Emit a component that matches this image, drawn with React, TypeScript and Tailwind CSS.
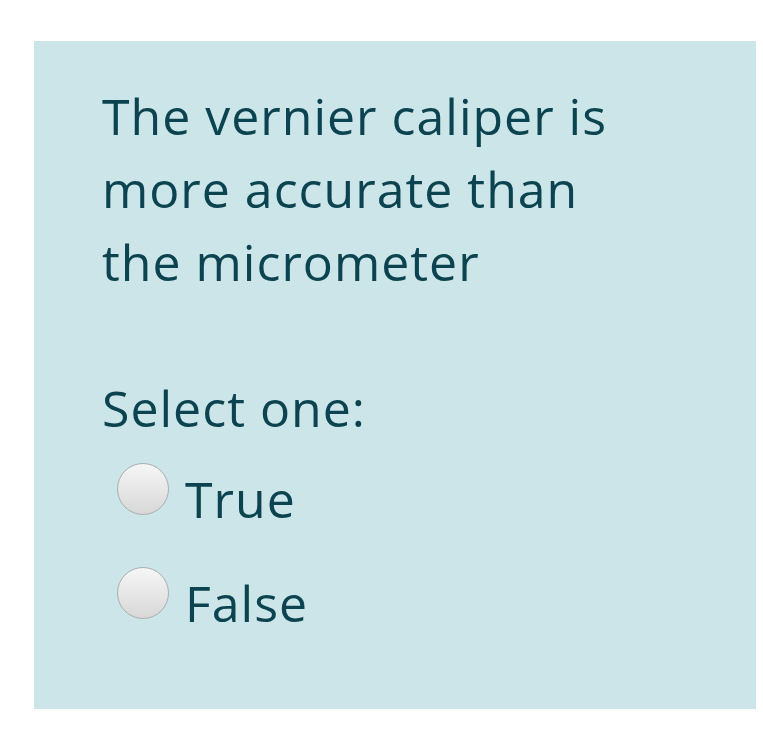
export default function App() {
  const options = ['True', 'False'];

  return (
    <div className="min-h-screen bg-white pt-[41px] pl-[34px]">
      <div
        className="w-[722px] h-[668px] bg-[#cce5e9] pl-[68px] pr-6 pt-[39px] text-[#0b4450]"
        style={{ fontFamily: '"Open Sans", sans-serif' }}
      >
        <p className="text-[50px] leading-[73px] tracking-[1px]">
          The vernier caliper is
          <br />
          more accurate than
          <br />
          the micrometer
        </p>

        <p className="text-[50px] leading-[73px] tracking-[1px] mt-[73px]">Select one:</p>

        <div className="mt-[18px] flex flex-col gap-[42px] pl-[15px]">
          {options.map((opt) => (
            <label key={opt} className="flex items-start gap-[16px] cursor-pointer">
              <span className="w-[52px] h-[52px] rounded-full border border-[#adadad] bg-gradient-to-b from-[#f6f6f6] to-[#d8d8d8] shrink-0" />
              <span className="text-[50px] leading-[52px] tracking-[1px] mt-[10px]">{opt}</span>
            </label>
          ))}
        </div>
      </div>
    </div>
  );
}
